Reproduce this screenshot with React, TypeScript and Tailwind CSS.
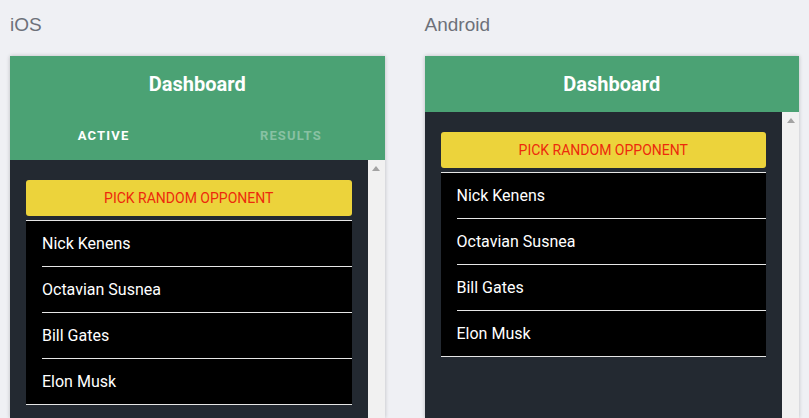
const players = ['Nick Kenens', 'Octavian Susnea', 'Bill Gates', 'Elon Musk'];

const ScrollTrack = () => (
  <div className="w-[17px] shrink-0 bg-[#f1f1f1] flex justify-center pt-[6px]">
    <svg width="8" height="5" viewBox="0 0 8 5">
      <path d="M0 5 L4 0 L8 5 Z" fill="#a3a3a3" />
    </svg>
  </div>
);

const PlayerList = () => (
  <div className="mt-1 bg-black border-y border-[#e6e6e6]">
    {players.map((name, i) => (
      <div key={name} className="pl-4">
        <div
          className={
            i < players.length - 1
              ? 'h-[46px] flex items-center border-b border-[#e6e6e6] text-white text-[16px]'
              : 'h-[45px] flex items-center text-white text-[16px]'
          }
        >
          {name}
        </div>
      </div>
    ))}
  </div>
);

const Panel = ({ tabs }: { tabs?: boolean }) => {
  return (
    <div className="flex-1 flex flex-col shadow-[0_0_4px_rgba(0,0,0,0.22)] font-['Roboto',sans-serif]">
      <div className="bg-[#4ba274]">
        <div className="h-[56px] flex items-center justify-center text-white text-[20px] font-bold">
          Dashboard
        </div>
        {tabs && (
          <div className="h-[48px] flex items-center text-[13px] font-bold tracking-[0.09em]">
            <div className="flex-1 text-center text-white">ACTIVE</div>
            <div className="flex-1 text-center text-white/35">RESULTS</div>
          </div>
        )}
      </div>
      <div className="flex-1 flex bg-[#232931]">
        <div className="flex-1 px-4 pt-5">
          <button className="w-full h-[36px] rounded-[3px] bg-[#ecd33b] text-[#ec2a0c] text-[14px] uppercase">
            Pick random opponent
          </button>
          <PlayerList />
        </div>
        <ScrollTrack />
      </div>
    </div>
  );
};

export default function App() {
  return (
    <div className="h-screen overflow-hidden bg-[#eff0f4] flex gap-10 px-[10px]">
      <div className="w-[375px] flex flex-col">
        <div className="h-[56px] pt-[13px] leading-[24px] text-[19px] text-[#6d7079] font-['Liberation_Sans',sans-serif]">
          iOS
        </div>
        <Panel tabs />
      </div>
      <div className="w-[375px] flex flex-col">
        <div className="h-[56px] pt-[13px] leading-[24px] text-[19px] text-[#6d7079] font-['Liberation_Sans',sans-serif]">
          Android
        </div>
        <Panel />
      </div>
    </div>
  );
}
